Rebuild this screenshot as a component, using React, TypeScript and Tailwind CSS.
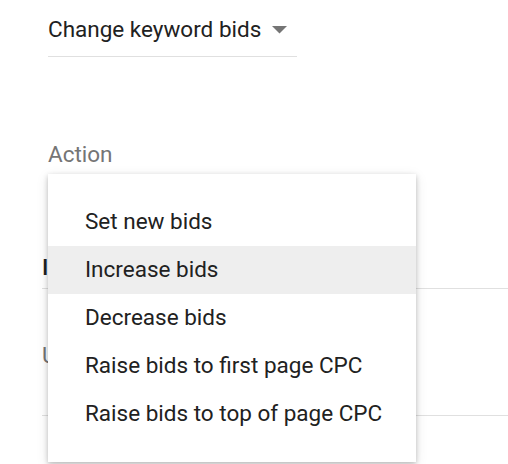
import React from "react";

const options = [
    "Set new bids",
    "Increase bids",
    "Decrease bids",
    "Raise bids to first page CPC",
    "Raise bids to top of page CPC",
];

const ArrowDown = () => (
    <svg width="15" height="8" viewBox="0 0 15 8" className="shrink-0">
        <path d="M0 0h15L7.5 7.5z" fill="#757575" />
    </svg>
);

export default function App() {
    const highlighted = 1;
    return (
        <div className="relative w-[508px] h-[464px] overflow-hidden bg-white text-[#212121] font-['Roboto',sans-serif]">
            {/* Bid strategy select */}
            <div className="ml-[48px] w-[249px] pt-[17px] border-b border-[#e0e0e0] pb-[14px]">
                <div className="flex items-center justify-between pr-[10px]">
                    <span className="text-[22.5px] leading-[25px]">Change keyword bids</span>
                    <ArrowDown />
                </div>
            </div>

            {/* Action label */}
            <div className="ml-[48px] mt-[85px] text-[22.5px] leading-[25px] text-[#757575]">Action</div>

            {/* Fields behind the menu (mostly covered) */}
            <div className="ml-[42px] mt-[88px] border-b border-[#e0e0e0] pb-[8px]">
                <div className="w-[6px] overflow-hidden whitespace-nowrap text-[22.5px] leading-[25px] font-medium">Increase bids</div>
            </div>
            <div className="ml-[42px] mt-[54px] border-b border-[#e0e0e0] pb-[47px]">
                <div className="w-[6px] overflow-hidden whitespace-nowrap text-[22.5px] leading-[25px] text-[#757575]">Up to</div>
            </div>

            {/* Open dropdown menu */}
            <div className="absolute left-[48px] top-[174px] w-[368px] bg-white py-[24px] shadow-[0_2px_5px_rgba(0,0,0,0.22),0_3px_12px_rgba(0,0,0,0.1)]">
                {options.map((opt, i) => (
                    <div
                        key={opt}
                        className={`h-[48px] flex items-center pl-[37px] text-[22.5px] ${i === highlighted ? "bg-[#eeeeee]" : ""}`}
                    >
                        {opt}
                    </div>
                ))}
            </div>
        </div>
    );
}
